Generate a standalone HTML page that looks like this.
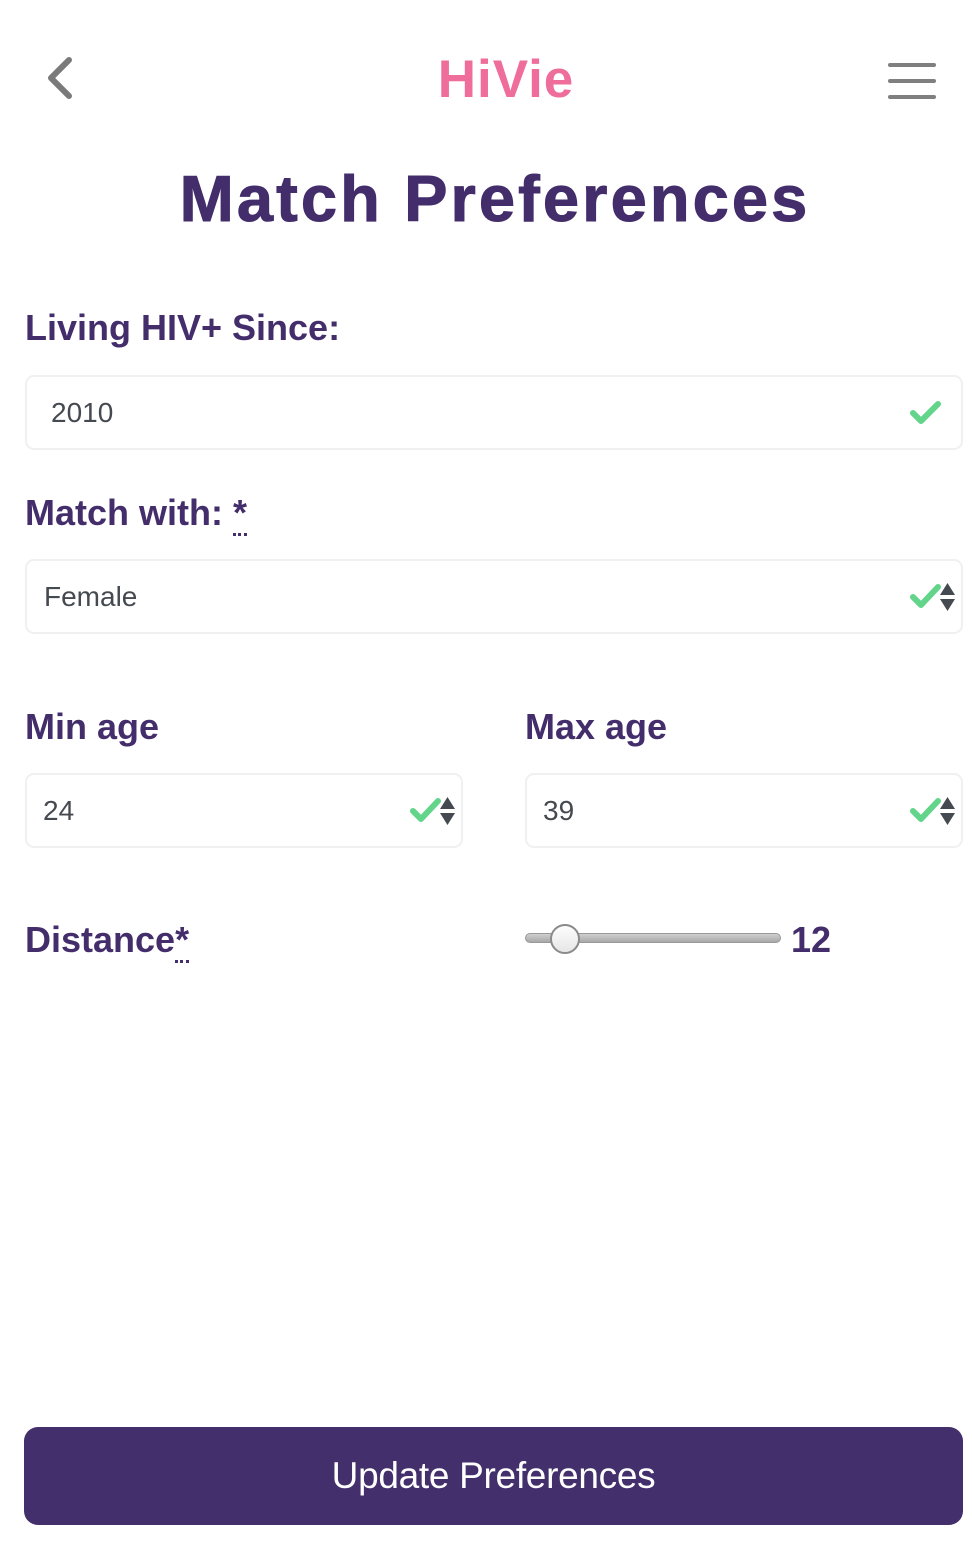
<!DOCTYPE html>
<html><head><meta charset="utf-8"><style>
*{margin:0;padding:0;box-sizing:border-box}
body{width:972px;height:1546px;background:#fff;position:relative;overflow:hidden;font-family:"Liberation Sans",sans-serif}
.a{position:absolute}
.lbl{position:absolute;left:25px;color:#432d6b;font-weight:bold;font-size:36px;letter-spacing:0px;line-height:40px}
.inp{position:absolute;height:75px;border:2px solid #f0f0f0;border-radius:9px;background:#fff}
.val{position:absolute;top:0;line-height:72px;font-size:28px;color:#454a50}
.dots{border-bottom:3px dotted #432d6b}
</style></head><body>
<svg class="a" style="left:40px;top:50px" width="40" height="56"><path d="M29 10 L11 28 L29 46" fill="none" stroke="#7a7a7a" stroke-width="6" stroke-linecap="round" stroke-linejoin="round"/></svg>
<div class="a" style="left:0;width:1012px;top:50px;text-align:center;font-size:53px;font-weight:bold;color:#ee6d9a;letter-spacing:1px;line-height:60px">HiVie</div>
<div class="a" style="left:888px;top:63px;width:48px;height:4px;background:#7f7f7f;border-radius:2px"></div>
<div class="a" style="left:888px;top:79px;width:48px;height:4px;background:#7f7f7f;border-radius:2px"></div>
<div class="a" style="left:888px;top:95px;width:48px;height:4px;background:#7f7f7f;border-radius:2px"></div>
<div class="a" style="left:0;width:990px;top:162px;text-align:center;font-size:65px;font-weight:bold;color:#432d6b;letter-spacing:3.1px;line-height:74px;-webkit-text-stroke:1px #432d6b">Match Preferences</div>

<div class="lbl" style="top:308px">Living HIV+ Since:</div>
<div class="inp" style="left:25px;top:375px;width:938px"><div class="val" style="left:24px">2010</div>
<svg class="a" style="left:882px;top:22px" width="34" height="28"><path d="M4 14 L12 22 L29 5" fill="none" stroke="#62d58b" stroke-width="6" stroke-linecap="round" stroke-linejoin="round"/></svg></div>

<div class="lbl" style="top:493px">Match with: <span class="dots">*</span></div>
<div class="inp" style="left:25px;top:559px;width:938px"><div class="val" style="left:17px">Female</div>
<svg class="a" style="left:882px;top:20px" width="50" height="34"><path d="M4 16 L12 24 L29 6" fill="none" stroke="#62d58b" stroke-width="6" stroke-linecap="round" stroke-linejoin="round"/><path d="M31 14 L46 14 L38.5 2Z M31 18 L46 18 L38.5 30Z" fill="#454a50"/></svg></div>

<div class="lbl" style="top:707px">Min age</div>
<div class="lbl" style="top:707px;left:525px">Max age</div>
<div class="inp" style="left:25px;top:773px;width:438px"><div class="val" style="left:16px">24</div>
<svg class="a" style="left:382px;top:20px" width="50" height="34"><path d="M4 16 L12 24 L29 6" fill="none" stroke="#62d58b" stroke-width="6" stroke-linecap="round" stroke-linejoin="round"/><path d="M31 14 L46 14 L38.5 2Z M31 18 L46 18 L38.5 30Z" fill="#454a50"/></svg></div>
<div class="inp" style="left:525px;top:773px;width:438px"><div class="val" style="left:16px">39</div>
<svg class="a" style="left:382px;top:20px" width="50" height="34"><path d="M4 16 L12 24 L29 6" fill="none" stroke="#62d58b" stroke-width="6" stroke-linecap="round" stroke-linejoin="round"/><path d="M31 14 L46 14 L38.5 2Z M31 18 L46 18 L38.5 30Z" fill="#454a50"/></svg></div>

<div class="lbl" style="top:920px">Distance<span class="dots">*</span></div>
<div class="a" style="left:525px;top:933px;width:256px;height:10px;border-radius:5px;background:linear-gradient(#d0d0d0,#a8a8a8);border:1px solid #999"></div>
<div class="a" style="left:550px;top:924px;width:30px;height:30px;border-radius:50%;background:linear-gradient(#fdfdfd,#e6e6e6);border:2px solid #8a8a8a"></div>
<div class="a" style="left:791px;top:920px;font-size:36px;font-weight:bold;color:#432d6b;line-height:40px">12</div>

<div class="a" style="left:24px;top:1427px;width:939px;height:98px;border-radius:14px;background:#432f6b;color:#fff;text-align:center;line-height:98px;font-size:37px;letter-spacing:-0.3px">Update Preferences</div>
</body></html>
